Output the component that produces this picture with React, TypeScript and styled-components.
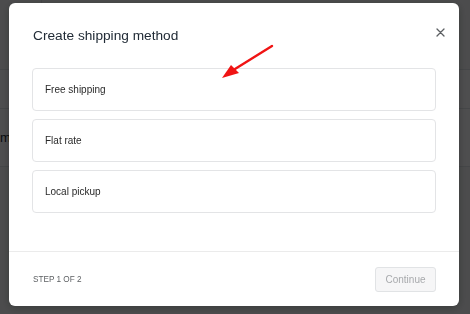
import React from 'react';
import styled, { createGlobalStyle } from 'styled-components';

const GlobalStyle = createGlobalStyle`
  html, body {
    margin: 0;
    padding: 0;
    width: 470px;
    height: 314px;
    overflow: hidden;
    background: #f4f6f8;
    font-family: 'Liberation Sans', Arial, sans-serif;
  }
`;

const Page = styled.div`
  width: 470px;
  height: 314px;
  display: flex;
  flex-direction: column;
`;

const PageRow = styled.div<{ height: number; shade?: boolean }>`
  height: ${p => p.height}px;
  flex-shrink: 0;
  border-bottom: 1px solid #dfe3e8;
  background: ${p => (p.shade ? '#fcfcfd' : '#f4f6f8')};
  display: flex;
  align-items: center;
  font-size: 13px;
  color: #212b36;
`;

const HeaderCell = styled.div`
  width: 41px;
  height: 100%;
  border-right: 1px solid #dfe3e8;
`;

const Backdrop = styled.div`
  position: fixed;
  inset: 0;
  background: rgba(0, 0, 0, 0.69);
  display: flex;
  align-items: flex-start;
  padding: 3px 0 0 9px;
`;

const Modal = styled.div`
  position: relative;
  width: 450px;
  height: 303px;
  background: #fff;
  border-radius: 6px;
  display: flex;
  flex-direction: column;
  box-shadow: 0 2px 8px rgba(0, 0, 0, 0.25);
`;

const Header = styled.div`
  height: 52px;
  display: flex;
  align-items: flex-start;
  justify-content: space-between;
  padding: 23px 14px 0 24px;
  box-sizing: border-box;
`;

const Title = styled.h2`
  margin: 0;
  font-size: 13.7px;
  font-weight: 400;
  color: #212b36;
  line-height: 20px;
`;

const CloseButton = styled.button`
  border: 0;
  background: none;
  padding: 0;
  margin-top: 1px;
  width: 10px;
  height: 10px;
  display: flex;
  align-items: center;
  justify-content: center;
  cursor: pointer;
`;

const Body = styled.div`
  flex: 1;
  display: flex;
  flex-direction: column;
  gap: 8px;
  padding: 13px 23px 0 23px;
`;

const Option = styled.button`
  height: 43px;
  box-sizing: border-box;
  border: 1px solid #e3e4e6;
  border-radius: 4px;
  background: #fff;
  text-align: left;
  padding: 0 0 0 12px;
  font-family: inherit;
  font-size: 10px;
  color: #2a2a2a;
  cursor: pointer;
`;

const Footer = styled.div`
  height: 55px;
  box-sizing: border-box;
  border-top: 1px solid #ebebeb;
  display: flex;
  align-items: center;
  justify-content: space-between;
  padding: 0 23px 0 24px;
`;

const Step = styled.span`
  font-size: 8.2px;
  font-weight: 500;
  color: #5c5f62;
  text-transform: uppercase;
`;

const ContinueButton = styled.button`
  width: 61px;
  height: 25px;
  box-sizing: border-box;
  border: 1px solid #e1e3e5;
  border-radius: 3px;
  background: #f6f6f7;
  color: #a8aaad;
  font-family: inherit;
  font-size: 10px;
  padding: 0;
`;

const ArrowSvg = styled.svg`
  position: absolute;
  left: 0;
  top: 0;
  pointer-events: none;
`;

const options = ['Free shipping', 'Flat rate', 'Local pickup'];

export default function App() {
  return (
    <>
      <GlobalStyle />
      <Page>
        <PageRow height={69}>
          <HeaderCell />
        </PageRow>
        <PageRow height={38} shade />
        <PageRow height={57} shade>
          <span>me</span>
        </PageRow>
      </Page>
      <Backdrop>
        <Modal>
          <Header>
            <Title>Create shipping method</Title>
            <CloseButton aria-label="Close">
              <svg width="9" height="9" viewBox="0 0 9 9">
                <path d="M1 1L8 8M8 1L1 8" stroke="#5c5f62" strokeWidth="1.3" strokeLinecap="round" />
              </svg>
            </CloseButton>
          </Header>
          <Body>
            {options.map(o => (
              <Option key={o}>{o}</Option>
            ))}
          </Body>
          <Footer>
            <Step>Step 1 of 2</Step>
            <ContinueButton disabled>Continue</ContinueButton>
          </Footer>
          <ArrowSvg width="450" height="303" viewBox="0 0 450 303">
            <line x1="263" y1="43" x2="226" y2="66" stroke="#f01414" strokeWidth="2.4" strokeLinecap="round" />
            <polygon points="213,75 222,62 230,70" fill="#f01414" />
          </ArrowSvg>
        </Modal>
      </Backdrop>
    </>
  );
}
